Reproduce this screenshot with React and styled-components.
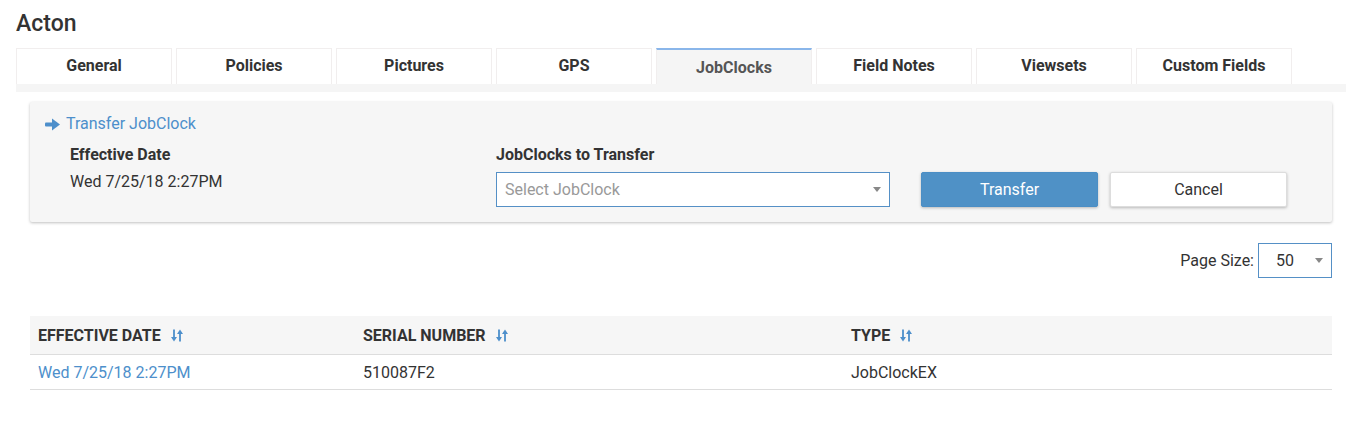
import React from 'react';
import styled, { createGlobalStyle } from 'styled-components';

const GlobalStyle = createGlobalStyle`
  body {
    margin: 0;
    background: #ffffff;
    font-family: Roboto, "Liberation Sans", Arial, sans-serif;
    color: #333333;
  }
`;

const tabs = ['General', 'Policies', 'Pictures', 'GPS', 'JobClocks', 'Field Notes', 'Viewsets', 'Custom Fields'];

const rows = [{ date: 'Wed 7/25/18 2:27PM', serial: '510087F2', type: 'JobClockEX' }];

const SortIcon = () => (
  <svg width="12" height="13" viewBox="0 0 12 13" fill="#4d8fcb">
    <rect x="2.1" y="0.5" width="1.8" height="8" />
    <path d="M0 8 L6 8 L3 12.5 Z" />
    <rect x="8.1" y="4.5" width="1.8" height="8" />
    <path d="M6 5 L12 5 L9 0.5 Z" />
  </svg>
);

const ArrowIcon = () => (
  <svg width="15" height="13" viewBox="0 0 15 13" fill="#4d8fcb">
    <rect x="0" y="4.5" width="9" height="4" rx="1" />
    <path d="M7 0.5 L15 6.5 L7 12.5 Z" />
  </svg>
);

const Caret = () => (
  <svg width="8" height="5" viewBox="0 0 8 5" fill="#888">
    <path d="M0 0 L8 0 L4 5 Z" />
  </svg>
);

const App = () => {
  return (
    <Page>
      <GlobalStyle />
      <Title>Acton</Title>
      <TabBar>
        {tabs.map((t) => (
          <Tab key={t} active={t === 'JobClocks'}>
            {t}
          </Tab>
        ))}
      </TabBar>
      <TabStrip />
      <Content>
        <Panel>
          <PanelLink>
            <ArrowIcon />
            Transfer JobClock
          </PanelLink>
          <FormRow>
            <Field width={426}>
              <Label>Effective Date</Label>
              <Value>Wed 7/25/18 2:27PM</Value>
            </Field>
            <Field width={394}>
              <Label>JobClocks to Transfer</Label>
              <Select>
                <Placeholder>Select JobClock</Placeholder>
                <Caret />
              </Select>
            </Field>
            <Buttons>
              <Button primary>Transfer</Button>
              <Button>Cancel</Button>
            </Buttons>
          </FormRow>
        </Panel>

        <PageSizeRow>
          <span>Page Size:</span>
          <PageSelect>
            <span>50</span>
            <Caret />
          </PageSelect>
        </PageSizeRow>

        <Table>
          <thead>
            <tr>
              <Th width={309}>
                Effective Date <SortIcon />
              </Th>
              <Th width={472}>
                Serial Number <SortIcon />
              </Th>
              <Th>
                Type <SortIcon />
              </Th>
            </tr>
          </thead>
          <tbody>
            {rows.map((r) => (
              <tr key={r.serial}>
                <Td link>{r.date}</Td>
                <Td>{r.serial}</Td>
                <Td>{r.type}</Td>
              </tr>
            ))}
          </tbody>
        </Table>
      </Content>
    </Page>
  );
};

const Page = styled.div`
  padding: 10px 16px 20px;
`;
const Title = styled.h1`
  margin: 0 0 10px;
  font-size: 23px;
  line-height: 28px;
  font-weight: 500;
  color: #333;
`;
const TabBar = styled.div`
  display: flex;
  gap: 4px;
`;
const Tab = styled.div`
  width: 156px;
  height: 36px;
  box-sizing: border-box;
  display: flex;
  align-items: center;
  justify-content: center;
  font-size: 16px;
  font-weight: 700;
  color: ${(p) => (p.active ? '#555' : '#333')};
  background: ${(p) => (p.active ? '#f5f5f5' : '#fff')};
  border: 1px solid #f1eeee;
  border-bottom: none;
  border-top: ${(p) => (p.active ? '2px solid #8ab6ea' : '1px solid #f1eeee')};
  padding-bottom: ${(p) => (p.active ? '0' : '2px')};
`;
const TabStrip = styled.div`
  height: 8px;
  background: #f5f5f5;
`;
const Content = styled.div`
  padding: 10px 14px 0;
`;
const Panel = styled.div`
  background: #f6f6f6;
  box-shadow: 0 1px 3px rgba(0, 0, 0, 0.25);
  border-radius: 2px;
  padding: 12px 14px 15px;
`;
const PanelLink = styled.div`
  display: flex;
  align-items: center;
  gap: 6px;
  padding-left: 1px;
  font-size: 16px;
  line-height: 20px;
  color: #4d8fcb;
`;
const FormRow = styled.div`
  display: flex;
  align-items: flex-end;
  margin-top: 11px;
  padding-left: 26px;
`;
const Field = styled.div`
  width: ${(p) => p.width}px;
  display: flex;
  flex-direction: column;
  gap: 7px;
  align-self: flex-start;
`;
const Label = styled.div`
  font-size: 16px;
  font-weight: 700;
  line-height: 20px;
  color: #333;
`;
const Value = styled.div`
  font-size: 16px;
  line-height: 20px;
  color: #333;
`;
const Select = styled.div`
  height: 35px;
  box-sizing: border-box;
  background: #fff;
  border: 1px solid #5590c6;
  display: flex;
  align-items: center;
  justify-content: space-between;
  padding: 0 8px 0 8px;
`;
const Placeholder = styled.span`
  font-size: 16px;
  color: #999;
`;
const Buttons = styled.div`
  display: flex;
  gap: 12px;
  margin-left: 31px;
`;
const Button = styled.button`
  width: 177px;
  height: 35px;
  border-radius: 2px;
  font-family: inherit;
  font-size: 16px;
  cursor: pointer;
  border: 1px solid ${(p) => (p.primary ? '#4b8ec5' : '#ddd')};
  background: ${(p) => (p.primary ? '#4f91c6' : '#fff')};
  color: ${(p) => (p.primary ? '#fff' : '#333')};
  box-shadow: 0 1px 3px rgba(0, 0, 0, 0.25);
`;
const PageSizeRow = styled.div`
  display: flex;
  justify-content: flex-end;
  align-items: center;
  gap: 4px;
  margin-top: 21px;
  font-size: 16px;
  color: #333;
`;
const PageSelect = styled.div`
  width: 74px;
  height: 35px;
  box-sizing: border-box;
  border: 1px solid #5590c6;
  display: flex;
  align-items: center;
  justify-content: space-between;
  padding: 0 8px 0 17px;
  font-size: 16px;
`;
const Table = styled.table`
  width: 100%;
  margin-top: 38px;
  border-collapse: collapse;
`;
const Th = styled.th`
  width: ${(p) => (p.width ? `${p.width}px` : 'auto')};
  height: 38px;
  background: #f6f6f6;
  border-bottom: 1px solid #ddd;
  padding: 0 8px;
  text-align: left;
  font-size: 16px;
  font-weight: 700;
  text-transform: uppercase;
  color: #333;
  svg {
    margin-left: 6px;
    vertical-align: -1px;
  }
`;
const Td = styled.td`
  height: 34px;
  border-bottom: 1px solid #ddd;
  padding: 0 8px;
  font-size: 16px;
  color: ${(p) => (p.link ? '#4d8fcb' : '#333')};
`;

export default App;
